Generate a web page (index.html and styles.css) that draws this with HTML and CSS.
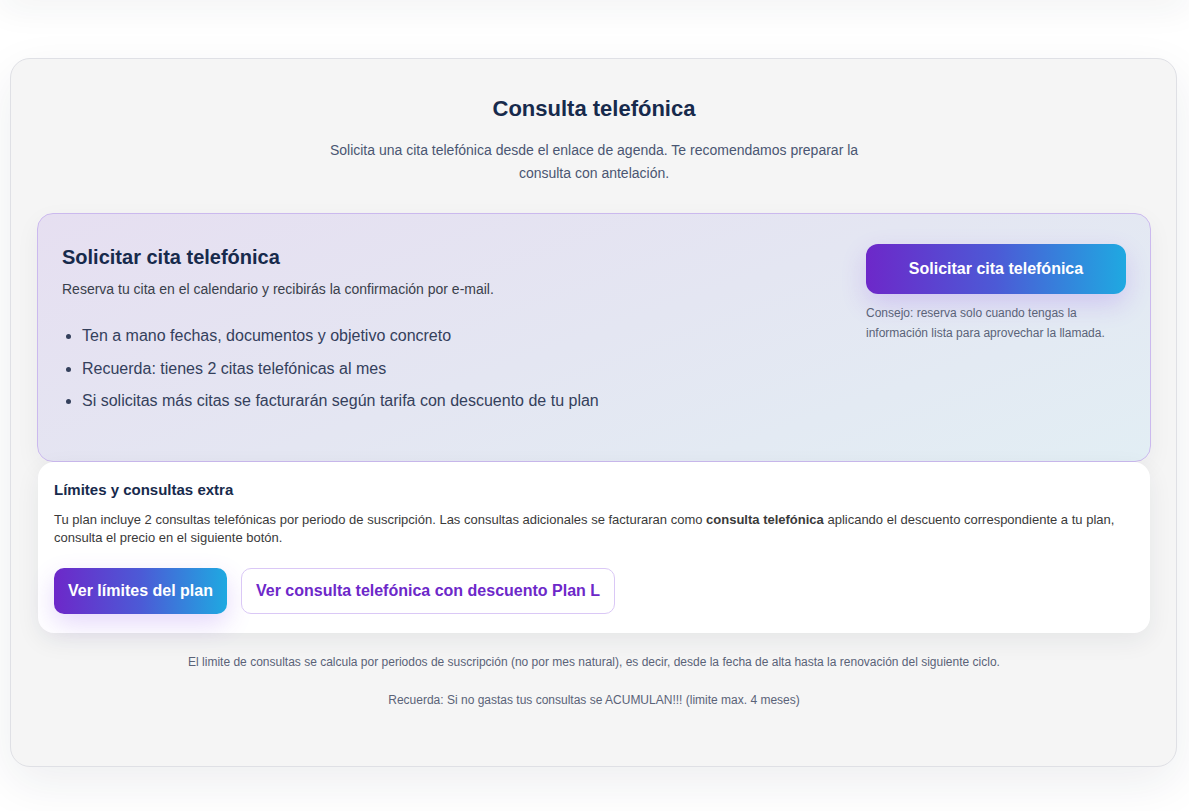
FILE: index.html
```html
<!DOCTYPE html>
<html lang="es">
<head>
    <meta charset="UTF-8">
    <meta name="viewport" content="width=device-width, initial-scale=1.0">
    <title>Consulta telefónica</title>
    <link rel="stylesheet" href="styles.css">
</head>
<body>

    <div class="top-bar"></div>

    <main class="page">
        <section class="phone-card">
            <!-- Cabecera -->
            <h1 class="phone-title">Consulta telefónica</h1>
            <p class="phone-intro">Solicita una cita telefónica desde el enlace de agenda. Te recomendamos preparar la consulta con antelación.</p>

            <!-- Bloque de reserva -->
            <div class="booking">
                <div class="booking-info">
                    <h2>Solicitar cita telefónica</h2>
                    <p class="booking-desc">Reserva tu cita en el calendario y recibirás la confirmación por e-mail.</p>
                    <ul class="booking-list">
                        <li>Ten a mano fechas, documentos y objetivo concreto</li>
                        <li>Recuerda: tienes 2 citas telefónicas al mes</li>
                        <li>Si solicitas más citas se facturarán según tarifa con descuento de tu plan</li>
                    </ul>
                </div>
                <div class="booking-action">
                    <a href="#" class="btn btn-gradient btn-lg">Solicitar cita telefónica</a>
                    <p class="booking-tip">Consejo: reserva solo cuando tengas la información lista para aprovechar la llamada.</p>
                </div>
            </div>

            <!-- Límites -->
            <div class="limits">
                <h3>Límites y consultas extra</h3>
                <p>Tu plan incluye 2 consultas telefónicas por periodo de suscripción. Las consultas adicionales se facturaran como <strong>consulta telefónica</strong> aplicando el descuento correspondiente a tu plan, consulta el precio en el siguiente botón.</p>
                <div class="limits-actions">
                    <a href="#" class="btn btn-gradient">Ver límites del plan</a>
                    <a href="#" class="btn btn-outline">Ver consulta telefónica con descuento Plan L</a>
                </div>
            </div>

            <p class="note">El limite de consultas se calcula por periodos de suscripción (no por mes natural), es decir, desde la fecha de alta hasta la renovación del siguiente ciclo.</p>
            <p class="note">Recuerda: Si no gastas tus consultas se ACUMULAN!!! (limite max. 4 meses)</p>
        </section>
    </main>

</body>
</html>
```

FILE: styles.css
```css
/* --- base --- */
:root {
    --navy: #172a4c;
    --text: #3a3f4b;
    --muted: #5a6378;
    --purple: #6d28c9;
    --cyan: #1fa9e1;
    --card-border: #dfe0e5;
}

body {
    margin: 0;
    font-family: "Liberation Sans", Arial, sans-serif;
    background-color: #ffffff;
    color: var(--text);
}

/* sombra de la barra superior (fuera de pantalla) */
.top-bar {
    height: 20px;
    margin-top: -20px;
    box-shadow: 0 4px 36px rgba(30, 41, 59, 0.09);
}

.page {
    padding: 58px 12px 44px 10px;
}

/* --- tarjeta principal --- */
.phone-card {
    background-color: #f5f5f5;
    border: 1px solid var(--card-border);
    border-radius: 20px;
    padding: 35px 25px 57px 26px;
    box-shadow: 0 16px 48px rgba(30, 41, 59, 0.08);
}

.phone-title {
    margin: 0;
    text-align: center;
    font-size: 22px;
    line-height: 29px;
    color: var(--navy);
}

.phone-intro {
    max-width: 560px;
    margin: 16px auto 28px;
    text-align: center;
    font-size: 14px;
    line-height: 23px;
    color: #4a5672;
}

/* --- bloque de reserva --- */
.booking {
    display: flex;
    gap: 40px;
    padding: 30px 24px 48px;
    border: 1px solid #cbb9ee;
    border-radius: 16px;
    background: linear-gradient(160deg, #e6dff1 0%, #e4e6f2 50%, #e2eef4 100%);
    box-shadow: 0 8px 24px rgba(30, 41, 59, 0.05);
}

.booking-info {
    flex: 1;
}

.booking-info h2 {
    margin: 0;
    font-size: 20px;
    line-height: 26px;
    color: var(--navy);
}

.booking-desc {
    margin: 9px 0 0;
    font-size: 14px;
    line-height: 20px;
    color: var(--text);
}

.booking-list {
    margin: 25px 0 0;
    padding-left: 20px;
    font-size: 16px;
    line-height: 24px;
    color: #34405c;
}

.booking-list li + li {
    margin-top: 8.5px;
}

.booking-action {
    width: 260px;
}

.booking-tip {
    margin: 9px 0 0;
    font-size: 12px;
    line-height: 20px;
    color: var(--muted);
}

/* --- botones --- */
.btn {
    display: inline-flex;
    align-items: center;
    justify-content: center;
    box-sizing: border-box;
    height: 46px;
    padding: 0 14px;
    border-radius: 10px;
    font-size: 16px;
    font-weight: bold;
    text-decoration: none;
}

.btn-gradient {
    background: linear-gradient(90deg, var(--purple) 0%, #4c5ad6 50%, var(--cyan) 100%);
    color: #ffffff;
    box-shadow: 0 10px 26px rgba(124, 58, 237, 0.2);
}

.btn-lg {
    display: flex;
    height: 50px;
    border-radius: 12px;
}

.btn-outline {
    background-color: #ffffff;
    border: 1px solid #dac8f6;
    color: var(--purple);
}

/* --- límites --- */
.limits {
    position: relative;
    margin: 0 1px;
    padding: 19px 16px 19px;
    background-color: #ffffff;
    border-radius: 16px;
    box-shadow: 0 8px 24px rgba(30, 41, 59, 0.07);
}

.limits h3 {
    margin: 0;
    font-size: 15px;
    line-height: 18px;
    color: var(--navy);
}

.limits p {
    margin: 12px 0 0;
    font-size: 13px;
    line-height: 18px;
    color: #3a3a3a;
}

.limits-actions {
    display: flex;
    gap: 14px;
    margin-top: 21px;
}

/* --- notas finales --- */
.note {
    margin: 20px 0 0;
    text-align: center;
    font-size: 12px;
    line-height: 18px;
    color: var(--muted);
}

.limits + .note {
    margin-top: 20px;
}
```
